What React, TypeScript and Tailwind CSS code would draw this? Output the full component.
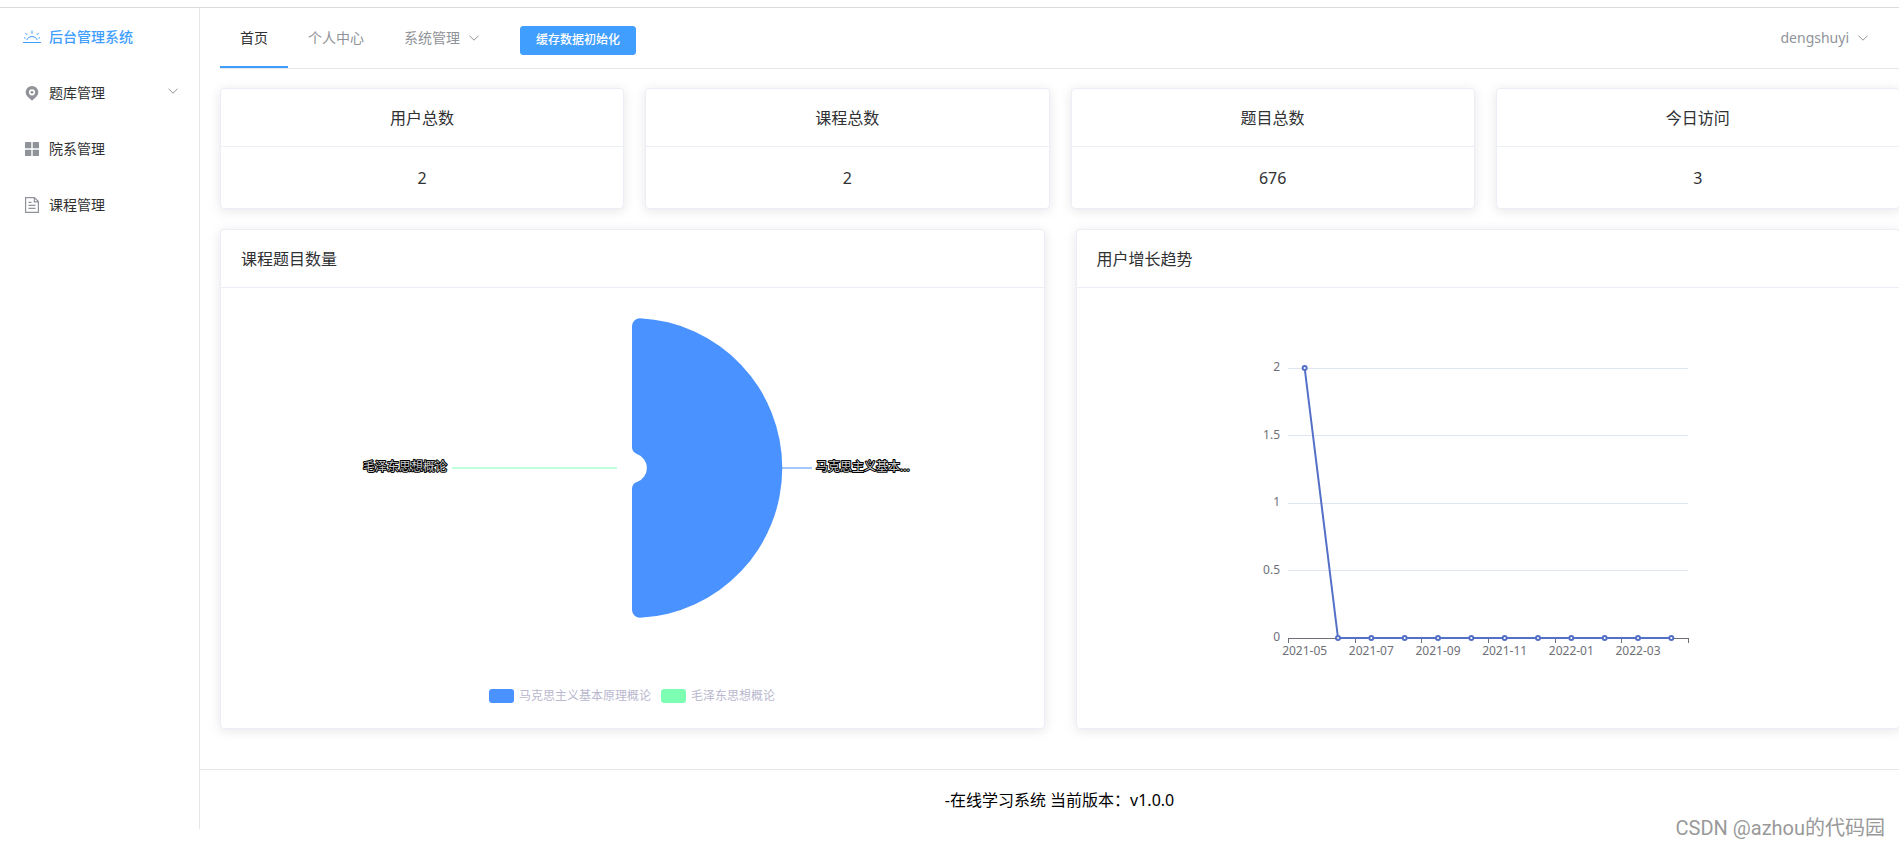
import type { ReactNode } from "react";

function ChevronDown({ className = "" }: { className?: string }) {
  return (
    <svg className={`h-3 w-3 ${className}`} viewBox="0 0 12 12" fill="none" stroke="currentColor" aria-hidden="true">
      <path d="M1.5 3.7 6 8.2l4.500-4.500" />
    </svg>
  );
}

function SunriseIcon() {
  return (
    <svg width="18" height="18" viewBox="0 0 18 18" fill="none" stroke="currentColor" aria-hidden="true">
      <path d="M0 14.500h18M3.500 12.200a5.900 5.900 0 0 1 11 0M9 2.500v3.200M2.200 4.900l2 2M15.800 4.900l-2 2M1 9.700l1.600.5M17 9.700l-1.600.5" />
    </svg>
  );
}

function LocationIcon() {
  return (
    <svg width="18" height="18" viewBox="0 0 18 18" aria-hidden="true">
      <path
        fill="currentColor"
        fillRule="evenodd"
        d="M9 2a6.300 6.300 0 0 1 6.300 6.300c0 2.600-1.500 4.300-3.300 5.700-1 .8-1.900 1.700-3 2.700-1.100-1-2-1.900-3-2.700-1.800-1.400-3.300-3.100-3.300-5.700A6.300 6.300 0 0 1 9 2Zm0 3.200a3.100 3.100 0 1 0 0 6.200 3.100 3.100 0 0 0 0-6.200Z"
      />
      <circle cx="9" cy="8.300" r="1.400" fill="currentColor" />
    </svg>
  );
}

function GridIcon() {
  return (
    <svg width="18" height="18" viewBox="0 0 18 18" fill="currentColor" aria-hidden="true">
      <rect x="2" y="2" width="6.300" height="6.300" rx=".5" />
      <rect x="9.700" y="2" width="6.300" height="6.300" rx=".5" />
      <rect x="2" y="9.700" width="6.300" height="6.300" rx=".5" />
      <rect x="9.700" y="9.700" width="6.300" height="6.300" rx=".5" />
    </svg>
  );
}

function DocumentIcon() {
  return (
    <svg width="18" height="18" viewBox="0 0 18 18" fill="none" stroke="currentColor" aria-hidden="true">
      <path strokeWidth="1.200" d="M2.600 1.600h8.800l4 4v10.800H2.600ZM11.300 1.800v4h4M5.500 6.300h3M5.500 9.300h7M5.500 12.400h7" />
    </svg>
  );
}

function SideItem({ icon, label, expandable = false }: { icon: ReactNode; label: string; expandable?: boolean }) {
  return (
    <li>
      <a href="#" className="flex h-14 items-center pr-5 pl-[23px] text-sm text-[#303133]">
        <span className="mr-2 text-[#909399]">{icon}</span>
        {label}
        {expandable && <ChevronDown className="mb-1 ml-auto text-[#909399]" />}
      </a>
    </li>
  );
}

function Card({ title, centered = false, children }: { title: string; centered?: boolean; children: ReactNode }) {
  return (
    <section
      className={`min-w-0 rounded border border-[#ebeef5] bg-white text-base leading-[21px] text-[#303133] shadow-[0_2px_12px_0_rgba(0,0,0,0.1)] ${centered ? "text-center" : ""}`}
    >
      <h2 className="border-b border-[#ebeef5] px-5 pt-[19px] pb-[17px]">{title}</h2>
      <div className={centered ? "px-5 pt-[21px] pb-[19px]" : "p-5"}>{children}</div>
    </section>
  );
}

const chartLabel = {
  fontSize: 12,
  fill: "#ccc",
  stroke: "#000",
  strokeWidth: 2,
  strokeLinejoin: "round",
  paintOrder: "stroke",
} as const;

function PieChart() {
  return (
    <svg className="mx-auto block h-[400px] w-[600px] max-w-full" viewBox="0 0 600 400" role="img" aria-label="课程题目数量">
      <path
        fill="#4992ff"
        d="M300 18a8 8 0 0 1 8-7.800A150 150 0 0 1 308 309.800a8 8 0 0 1-8-7.800V181.500a7.500 7.500 0 0 1 5-7.400A15 15 0 0 0 305 145.900a7.500 7.500 0 0 1-5-7.400Z"
      />
      <path stroke="#4992ff" strokeOpacity=".5" strokeWidth="2" d="M450 160h30" />
      <path stroke="#7cffb2" strokeOpacity=".5" strokeWidth="2" d="M120 160h165" />
      <text x="484" y="163" {...chartLabel}>马克思主义基本...</text>
      <text x="115" y="163" textAnchor="end" {...chartLabel}>毛泽东思想概论</text>
      <rect x="157" y="381" width="25" height="14" rx="3" fill="#4992ff" />
      <text x="187" y="392" fontSize="12" fill="#b9b8ce">马克思主义基本原理概论</text>
      <rect x="329" y="381" width="25" height="14" rx="3" fill="#7cffb2" />
      <text x="359" y="392" fontSize="12" fill="#b9b8ce">毛泽东思想概论</text>
    </svg>
  );
}

const monthly = [2, 0, 0, 0, 0, 0, 0, 0, 0, 0, 0, 0];
const monthLabels = ["2021-05", "2021-07", "2021-09", "2021-11", "2022-01", "2022-03"];
const ticks = [0, 0.5, 1, 1.5, 2];
const step = 400 / 12;
const xAt = (i: number) => 50 + step * (i + 0.5);
const yAt = (v: number) => 330 - v * 135;

function LineChart() {
  return (
    <svg className="mx-auto block h-[400px] w-[500px] max-w-full" viewBox="0 0 500 400" role="img" aria-label="用户增长趋势">
      {ticks.map((t) => (
        <g key={t}>
          <path d={`M50 ${Math.floor(yAt(t)) + 0.5}h400`} stroke={t === 0 ? "#6e7079" : "#e0e6f1"} />
          <text x="42" y={yAt(t) + 3} textAnchor="end" fontSize="12" fill="#6e7079">
            {t}
          </text>
        </g>
      ))}
      {[0, 1, 2, 3, 4, 5, 6].map((i) => (
        <path key={i} d={`M${Math.min(Math.round(50 + i * step * 2) + 0.5, 450.5)} 330v5`} stroke="#6e7079" />
      ))}
      {monthLabels.map((m, i) => (
        <text key={m} x={xAt(i * 2)} y="347" textAnchor="middle" fontSize="12" fill="#6e7079">
          {m}
        </text>
      ))}
      <polyline
        points={monthly.map((v, i) => `${xAt(i)},${yAt(v)}`).join(" ")}
        fill="none"
        stroke="#5470c6"
        strokeWidth="2"
        strokeLinejoin="bevel"
      />
      {monthly.map((v, i) => (
        <circle key={i} cx={xAt(i)} cy={yAt(v)} r="2" fill="#fff" stroke="#5470c6" strokeWidth="2" />
      ))}
    </svg>
  );
}

const stats = [
  { title: "用户总数", value: 2 },
  { title: "课程总数", value: 2 },
  { title: "题目总数", value: 676 },
  { title: "今日访问", value: 3 },
];

export default function App() {
  return (
    <div className="relative overflow-x-hidden bg-white pt-[7px] pb-[17px] font-['Noto_Sans','Noto_Sans_CJK_SC',sans-serif]">
      <div className="flex border-t border-[#dcdcdc]">
        <aside className="w-[200px] shrink-0 border-r border-[#e6e6e6] pt-px">
          <a href="#" className="flex h-14 items-center pl-[23px] text-sm font-medium text-[#409eff]">
            <span className="mr-2">
              <SunriseIcon />
            </span>
            后台管理系统
          </a>
          <ul>
            <SideItem icon={<LocationIcon />} label="题库管理" expandable />
            <SideItem icon={<GridIcon />} label="院系管理" />
            <SideItem icon={<DocumentIcon />} label="课程管理" />
          </ul>
        </aside>

        <div className="min-w-0 flex-1">
          <header className="ml-5 flex h-[61px] border-b border-[#e6e6e6] text-sm text-[#909399]">
            <nav className="flex">
              <a href="#" className="flex h-15 items-center border-b-2 border-[#409eff] px-5 pt-0.5 text-[#303133]">
                首页
              </a>
              <a href="#" className="flex h-15 items-center border-b-2 border-transparent px-5 pt-0.5">
                个人中心
              </a>
              <button type="button" className="flex h-15 items-center gap-2 border-b-2 border-transparent px-5 pt-0.5">
                系统管理
                <ChevronDown />
              </button>
            </nav>
            <div className="flex items-center pt-1 pl-5">
              <button
                type="button"
                className="h-[29px] rounded-[3px] border border-[#409eff] bg-[#409eff] px-[15px] text-xs leading-3 font-medium text-white"
              >
                缓存数据初始化
              </button>
            </div>
            <button
              type="button"
              className="mr-[10px] ml-auto flex h-15 items-center gap-2 border-b-2 border-transparent px-5 pt-0.5"
            >
              dengshuyi
              <ChevronDown />
            </button>
          </header>

          <main className="-mr-px ml-5 pt-[19px] pb-10">
            <div className="grid grid-cols-4 gap-[21px]">
              {stats.map((s) => (
                <Card key={s.title} title={s.title} centered>
                  {s.value}
                </Card>
              ))}
            </div>
            <div className="mt-5 grid grid-cols-2 gap-[31px]">
              <Card title="课程题目数量">
                <PieChart />
              </Card>
              <Card title="用户增长趋势">
                <LineChart />
              </Card>
            </div>
          </main>

          <footer className="flex h-15 items-center justify-center border-t border-[#e6e6e6] pl-5 text-base text-black">
            -在线学习系统 当前版本：v1.0.0
          </footer>
        </div>
      </div>
      <div className="absolute right-[14px] bottom-2 font-[Roboto,'Noto_Sans_CJK_SC',sans-serif] text-xl leading-none text-[#999] [text-shadow:1px_1px_0_#fff]">
        CSDN @azhou的代码园
      </div>
    </div>
  );
}
